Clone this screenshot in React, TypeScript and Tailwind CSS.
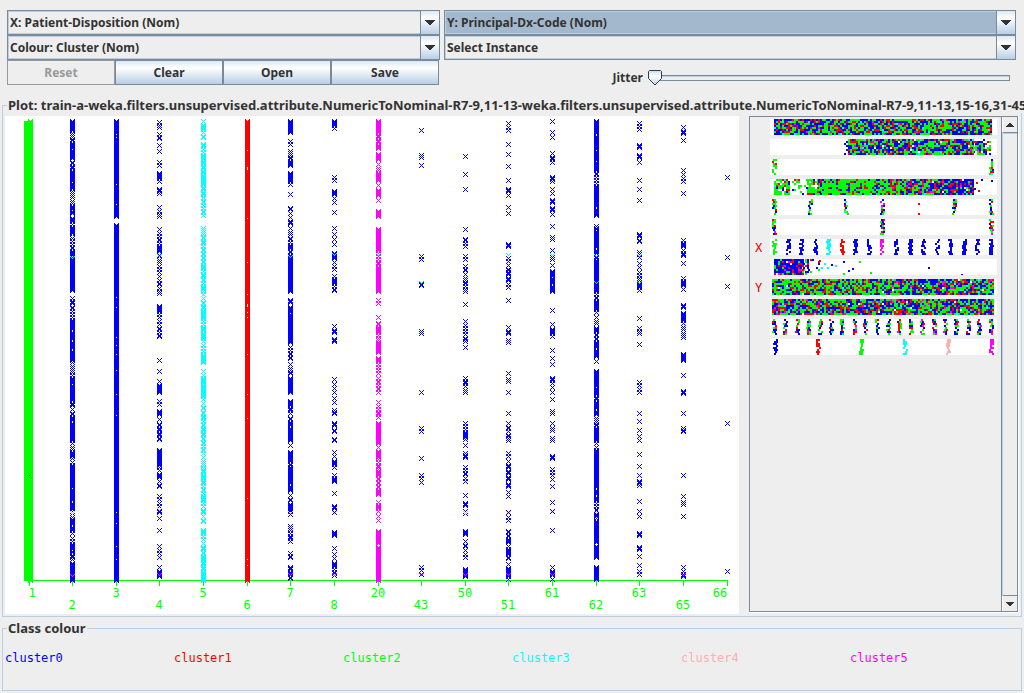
import { useState } from "react";
import type { ReactNode } from "react";

const BLUE = "#0000ff";
const RED = "#ff0000";
const GREEN = "#00ff00";
const CYAN = "#00ffff";
const PINK = "#ffafaf";
const MAGENTA = "#ff00ff";

/** Small seeded generator, so that each render draws the same points. */
function seeded(seed: number) {
  let s = seed;
  return () => {
    s = (s * 1664525 + 1013904223) % 4294967296;
    return s / 4294967296;
  };
}

/*
 * Points of a column: "y" is one mark, "a-b" a solid run,
 * "a-bd" a dense run, "a-bm" a medium run and "a-bl" a loose run.
 */
type Column = {
  label: string;
  x: number;
  labelX?: number;
  color: string;
  runs: string;
  holes?: number[];
  extra?: [number, string][];
};

const COLUMNS: Column[] = [
  { label: "1", x: 30, labelX: 32, color: GREEN, runs: "121-580" },
  {
    label: "2", x: 72, color: BLUE,
    runs: "121-130 133-140l 143-157 158-168m 171-188 191-203l 206-213 218-238d 241-248d 251-255 257-290 298-303m 307-339d 342-362d 366-375l 378-400 403-420m 423-440 443-449m 452-456 458-462l 465-500 503-509 511-517l 519-533d 538-541l 544-559d 563-580",
    extra: [[258, CYAN], [513, PINK], [576, MAGENTA]],
    holes: [149, 182, 210, 236, 384, 488, 550],
  },
  { label: "3", x: 116, color: BLUE, runs: "121-216 225-580", holes: [134, 137, 184, 204, 297, 307, 337, 345, 354, 370, 394, 415, 512, 523, 546, 559] },
  {
    label: "4", x: 159, color: BLUE,
    runs: "122 125 127 134 137-138 145 151 162 165 173-178 181 189-191 193 207 211 214 216 229 233 236 239-251d 255-262m 266-293m 306-311 314-336m 360 371 381 385-392 401 404 411-414 419 424-439d 450-465d 467-486m 496-512m 518 530 546 550 553 557 567 571-576",
    extra: [[256, CYAN], [510, PINK], [575, MAGENTA]],
  },
  {
    label: "5", x: 203, color: CYAN,
    runs: "121 125-129 132-137l 144-168d 171-184 187-205d 208-215m 228-234l 237-258d 261-291d 294-303l 306-338d 341-348m 351-362d 371-375l 378-396 399-421m 424-450d 453-468l 470-500d 503-521m 530-533 536-560m 562-580d",
    holes: [150, 160, 174, 198, 270, 284, 325, 354, 384, 437, 499],
  },
  { label: "6", x: 247, color: RED, runs: "121-580", holes: [150, 167, 168, 169, 218, 262, 294, 304, 305, 306, 312, 317, 354, 394, 418, 498, 559, 565] },
  {
    label: "7", x: 290, color: BLUE,
    runs: "121-132 141 144 151-158l 161-165d 173-181 184 194 208-223m 228-234l 238-256d 258-291 300-302 307-312 314-342 347 350 353-358d 364-373l 378-392 401-413d 418-425d 428-440 445 452-465d 467-483 486-490 495-500l 504-511 514 526-530l 533-541m 553 556-557 567-578d",
    extra: [[257, CYAN], [513, PINK], [575, MAGENTA]],
  },
  {
    label: "8", x: 334, color: BLUE,
    runs: "121-125 128 177 180 191-194 198 202 212 228 234 239 244 253-258d 262 266 269 276-290d 326 330-332 339-341 379 384 388 392 398 402 410 412-413 423-425 430-431 439-440 452 456 461-464 467 475-481d 493 506-508 512 532-535 548 554 558 563-566 569-575m",
    extra: [[255, CYAN], [513, PINK], [575, MAGENTA]],
  },
  {
    label: "20", x: 378, color: MAGENTA,
    runs: "121-132 135-148d 154-159 164-170m 173-180 185 190-195 200 211-216 229-250 253-264d 267-291 300 303 317 323-340d 342-352 358-361 364-373m 378-392d 402-417m 423-443 447 451-457 459-469m 471-494d 502-511d 516 520 531-543 547-580",
    extra: [[255, CYAN]],
  },
  { label: "43", x: 421, color: BLUE, runs: "130 155 157 165 256 259 284 285 331 333 392 428 431 458 475 478 482 567 570 574", extra: [[283, GREEN], [575, MAGENTA]] },
  { label: "50", x: 465, color: BLUE, runs: "156 174 189 229 239-240 243 246 256 259 266-280m 282-291d 304 321-341m 347 378 381-392m 423 426-439d 445 453 455-457 467-481m 495 503-505 511 513 531-534 541-550m 550-557l 569-576", extra: [[513, PINK], [575, MAGENTA]] },
  { label: "51", x: 508, color: BLUE, runs: "123 127 130 144 154 166 180 189-191 195 207 213 244-246 258-270m 272-287m 300 327 331-333 340 342 373 379 381 392 413 423-438m 440 453 456 461-478m 479 484-486 492 496 512 517 520 531-542d 546-558d 564 568-576 579", extra: [[255, CYAN], [513, PINK], [575, MAGENTA]] },
  { label: "61", x: 552, color: BLUE, runs: "121 132 137 153 157-159 162 177-179 181 189 193 200-202 208-210 214 226 237 239 250 257 259 265 271-276 278-283d 286-291 310 324 329-333 336 350 358 364 378-380 383 387 392 399 411 413 423 428 430 438 440 456-458 469 472 475 479 486 502 511 530 567 571-575 579", extra: [[255, CYAN], [512, PINK], [575, MAGENTA]] },
  { label: "62", x: 596, color: BLUE, runs: "121-133 136-170 173-183m 186-206 209-215 226-229l 231-247 250-258d 260-291 294-312d 317-323l 328-347d 350-356 361 371-394 397-408d 411-414 418-425l 428-440 443-447l 450-487 490-500d 503-518d 521-542 546-557 567-579", holes: [150, 161, 387, 504], extra: [[256, CYAN], [283, GREEN], [513, PINK]] },
  { label: "63", x: 639, color: BLUE, runs: "123 126 129 145-147 155-157 162 180 189 200 234-236 240-241 252 254 257 263 267 272-280m 284-287 290 318 328 331 333 344 382 385 389 392 413 421 430 436 440 454 466 475 481-483 485 501 511 516 533-535 547-549 556 565 571 574", extra: [[256, CYAN], [283, GREEN]] },
  { label: "65", x: 683, color: BLUE, runs: "127 131-133 140 170 174 178 181 193 240 243-246 250 253-255 263 278 281-285 289 305-307 313-320 323-337l 354-360 375 391-393 413 428 430-431 475 496 502 504 516 567 571 574-576", extra: [[575, MAGENTA]] },
  { label: "66", x: 727, labelX: 720, color: BLUE, runs: "177 257 286 423 571" },
];

const CROSS: [number, number][] = [
  [-2, -2], [2, -2], [-1, -1], [1, -1], [0, 0], [-1, 1], [1, 1], [-2, 2], [2, 2],
];

function expandRuns(runs: string, random: () => number): number[] {
  const ys: number[] = [];
  for (const token of runs.split(" ")) {
    const [from, rest] = token.split("-");
    if (rest === undefined) {
      ys.push(Number(from));
      continue;
    }
    const end = parseInt(rest, 10);
    const density = rest.replace(/\d/g, "");
    let y = Number(from);
    while (y <= end) {
      ys.push(y);
      if (density === "d") y += random() < 0.72 ? 1 : 3;
      else if (density === "m") y += random() < 0.4 ? 1 : random() < 0.5 ? 3 : 4;
      else if (density === "l") y += random() < 0.6 ? 2 : 4;
      else y += 1;
    }
    ys.push(end);
  }
  return ys;
}

function toPaths(pixels: Map<string, string>, size: number) {
  const byColor = new Map<string, string[]>();
  pixels.forEach((color, key) => {
    const list = byColor.get(color) ?? [];
    list.push(`M${key}h${size}v${size}h-${size}z`);
    byColor.set(color, list);
  });
  return [...byColor].map(([color, list]) => ({ color, d: list.join("") }));
}

function plotPaths() {
  const random = seeded(11);
  const pixels = new Map<string, string>();
  const mark = (x: number, y: number, color: string) =>
    CROSS.forEach(([dx, dy]) => pixels.set(`${x + dx} ${y + dy}`, color));
  for (const col of COLUMNS) {
    expandRuns(col.runs, random).forEach((y) => mark(col.x, y, col.color));
    col.extra?.forEach(([y, color]) => {
      CROSS.slice(0, 5).forEach(([dx, dy]) => pixels.set(`${col.x + dx} ${y + dy}`, color));
    });
    col.holes?.forEach((y) => pixels.delete(`${col.x} ${y}`));
  }
  return toPaths(pixels, 1);
}

const PLOT = plotPaths();

function ScatterPlot() {
  return (
    <svg viewBox="5 116 734 498" className="block h-auto w-full bg-white" role="img" aria-label="Patient-Disposition against Principal-Dx-Code">
      <g shapeRendering="crispEdges">
        <rect x="27" y="580" width="701" height="1" fill={GREEN} />
        {COLUMNS.map((c) => (
          <rect key={c.label} x={c.label === "1" ? 29 : c.x} y="581" width="1" height="5" fill={GREEN} />
        ))}
        <rect x="24" y="121" width="4" height="460" fill={GREEN} />
        {PLOT.map((p) => (
          <path key={p.color} d={p.d} fill={p.color} />
        ))}
        <rect x="29" y="475" width="1" height="1" fill="#004000" />
      </g>
      <g className="font-['DejaVu_Sans_Mono',monospace] text-[12px]" fill={GREEN} textAnchor="middle">
        {COLUMNS.map((c, i) => (
          <text key={c.label} x={c.labelX ?? c.x} y={i % 2 === 0 ? 597 : 609}>
            {c.label}
          </text>
        ))}
      </g>
    </svg>
  );
}

type Weights = [string, number][];
const MIX: Weights = [[BLUE, 0.37], [GREEN, 0.39], [RED, 0.19], [MAGENTA, 0.03], [CYAN, 0.02]];
const GREENISH: Weights = [[GREEN, 0.75], [BLUE, 0.14], [RED, 0.1], [CYAN, 0.01]];
const BLUISH: Weights = [[BLUE, 0.62], [GREEN, 0.16], [RED, 0.18], [MAGENTA, 0.04]];

/** Band of points: from, to, density, colours. */
type Band = { from: number; to: number; density: number; mix: Weights };
/** Narrow cluster of jittered points around x. */
type Cluster = { x: number; mix: Weights };
type Strip = { mark?: string; bands?: Band[]; clusters?: Cluster[]; dots?: [number, number, string][] };

const solid = (color: string): Weights => [[color, 1]];
const DISPOSITION = [GREEN, BLUE, BLUE, BLUE, CYAN, RED, BLUE, BLUE, MAGENTA, BLUE, BLUE, BLUE, BLUE, BLUE, BLUE, BLUE, BLUE];

const STRIPS: Strip[] = [
  { bands: [{ from: 4, to: 221, density: 1, mix: MIX }] },
  {
    bands: [
      { from: 74, to: 79, density: 0.35, mix: BLUISH },
      { from: 78, to: 203, density: 0.98, mix: MIX },
      { from: 203, to: 221, density: 0.65, mix: MIX },
    ],
  },
  { clusters: [{ x: 4, mix: GREENISH }, { x: 221, mix: MIX }] },
  {
    bands: [
      { from: 4, to: 19, density: 0.75, mix: GREENISH },
      { from: 20, to: 38, density: 0.3, mix: GREENISH },
      { from: 37, to: 50, density: 0.8, mix: GREENISH },
      { from: 48, to: 120, density: 1, mix: GREENISH },
      { from: 120, to: 160, density: 1, mix: MIX },
      { from: 160, to: 203, density: 0.98, mix: BLUISH },
    ],
    dots: [[204, 9, BLUE], [206, 3, RED], [208, 11, RED], [211, 0, BLUE], [221, 1, BLUE]],
  },
  {
    clusters: [4, 40, 76, 112, 184, 221].map((x) => ({ x, mix: MIX })),
    dots: [[148, 4, RED], [148, 14, RED]],
  },
  { clusters: [4, 112, 221].map((x) => ({ x, mix: MIX })) },
  { mark: "X", clusters: DISPOSITION.map((c, i) => ({ x: 4 + Math.round(i * 13.55), mix: solid(c) })) },
  {
    bands: [
      { from: 4, to: 33, density: 0.98, mix: [[BLUE, 0.68], [RED, 0.17], [GREEN, 0.09], [MAGENTA, 0.06]] },
      { from: 33, to: 38, density: 0.6, mix: BLUISH },
      { from: 38, to: 50, density: 0.2, mix: BLUISH },
    ],
    dots: [
      [49, 1, RED], [54, 4, CYAN], [61, 5, BLUE], [65, 6, CYAN], [73, 2, BLUE], [73, 14, GREEN], [78, 11, BLUE],
      [82, 9, BLUE], [89, 2, GREEN], [100, 13, GREEN], [158, 8, BLUE], [191, 15, BLUE], [51, 8, CYAN], [57, 8, CYAN],
    ],
  },
  {
    mark: "Y",
    bands: [
      { from: 2, to: 120, density: 0.99, mix: [[GREEN, 0.5], [RED, 0.22], [BLUE, 0.27], [CYAN, 0.01]] },
      { from: 120, to: 223, density: 0.99, mix: MIX },
    ],
  },
  { bands: [{ from: 2, to: 223, density: 0.99, mix: MIX }] },
  { clusters: Array.from({ length: 20 }, (_, i) => ({ x: 4 + Math.round(i * 11.4), mix: MIX })) },
  { clusters: [BLUE, RED, GREEN, CYAN, PINK, MAGENTA].map((c, i) => ({ x: 5 + Math.round(i * 43.2), mix: solid(c) })) },
];

function pick(mix: Weights, r: number) {
  let sum = 0;
  for (const [color, weight] of mix) {
    sum += weight;
    if (r < sum) return color;
  }
  return mix[0][0];
}

function stripPaths(strip: Strip, seed: number) {
  const random = seeded(seed * 977 + 5);
  const pixels = new Map<string, string>();
  strip.bands?.forEach((b) => {
    for (let x = b.from; x < b.to; x += 2)
      for (let y = 0; y < 16; y += 2)
        if (random() < b.density) pixels.set(`${x} ${y}`, pick(b.mix, random()));
  });
  strip.clusters?.forEach((c) => {
    for (let y = 0; y < 16; y += 2) {
      const offset = Math.floor(random() * 4) - 2;
      pixels.set(`${c.x + offset} ${y}`, pick(c.mix, random()));
      if (random() < 0.55) pixels.set(`${c.x + (offset < 0 ? offset + 2 : offset - 2)} ${y}`, pick(c.mix, random()));
    }
  });
  strip.dots?.forEach(([x, y, color]) => pixels.set(`${x} ${y}`, color));
  return toPaths(pixels, 2);
}

const STRIP_PATHS = STRIPS.map((strip, i) => stripPaths(strip, i + 1));

function AttributeStrips() {
  return (
    <div className="flex min-w-0 flex-1 flex-col gap-1 pt-0.5 pr-1">
      {STRIPS.map((strip, i) => (
        <div key={i} className="flex h-4 items-center">
          <span className="w-5 pt-0.5 pl-[5px] font-['DejaVu_Sans_Mono',monospace] text-[12px] leading-4 text-[#e00000]">{strip.mark}</span>
          <svg viewBox="0 0 227 16" preserveAspectRatio="none" className="h-4 min-w-0 flex-1 bg-white" shapeRendering="crispEdges" aria-hidden="true">
            {STRIP_PATHS[i].map((p) => (
              <path key={p.color} d={p.d} fill={p.color} />
            ))}
          </svg>
        </div>
      ))}
    </div>
  );
}

function Arrow({ up = false, small = false }: { up?: boolean; small?: boolean }) {
  return (
    <svg
      width={small ? 8 : 10}
      height={small ? 4 : 5}
      viewBox="0 0 10 5"
      shapeRendering="crispEdges"
      className={up ? "rotate-180" : ""}
      aria-hidden="true"
    >
      <path d="M0 0h10v1h-1v1h-1v1h-1v1h-1v1h-2v-1h-1v-1h-1v-1h-1v-1h-1z" fill="#333333" />
    </svg>
  );
}

function Combo({ label, text, selected = false }: { label: string; text: string; selected?: boolean }) {
  return (
    <div className="relative h-[25px] border border-[#7a8a99]">
      <select
        aria-label={label}
        className={`block h-full w-full appearance-none border border-[#b8cfe5] pr-5 pl-px font-bold text-[#333333] outline-none ${selected ? "bg-[#a3b8cc]" : "bg-[#eeeeee]"}`}
      >
        <option>{text}</option>
      </select>
      <span className="pointer-events-none absolute inset-y-0 right-0 flex w-[19px] items-center justify-center border-l border-[#7a8a99] bg-linear-to-b from-[#dde8f3] via-white via-30% to-[#b8cfe5]">
        <Arrow />
      </span>
    </div>
  );
}

function ToolButton({ children, disabled = false }: { children: ReactNode; disabled?: boolean }) {
  return (
    <button
      type="button"
      disabled={disabled}
      className={`h-[25px] flex-1 border font-bold ${disabled ? "border-[#999999] bg-[#eeeeee] text-[#999999]" : "border-[#7a8a99] bg-linear-to-b from-[#dde8f3] via-white via-30% to-[#b8cfe5] text-[#333333]"}`}
    >
      {children}
    </button>
  );
}

function JitterSlider() {
  const [value, setValue] = useState(0);
  return (
    <div className="flex items-center justify-end gap-[5px] pt-2 pr-1.5">
      <label htmlFor="jitter" className="font-bold">
        Jitter
      </label>
      <div className="relative flex h-5 w-[362px] items-center">
        <div className="ml-1.5 h-1.5 flex-1 border border-[#7a8a99] bg-[#eeeeee] shadow-[inset_0_1px_0_#b8cfe5]" />
        <input
          id="jitter"
          type="range"
          min={0}
          max={50}
          value={value}
          onChange={(e) => setValue(Number(e.target.value))}
          className="absolute inset-0 h-full w-full opacity-0"
        />
        <svg
          width="15"
          height="16"
          viewBox="0 0 15 16"
          className="pointer-events-none absolute top-0.5"
          style={{ left: `${(value / 50) * 95}%` }}
          aria-hidden="true"
        >
          <defs>
            <linearGradient id="thumb" x1="0" y1="0" x2="0" y2="1">
              <stop offset="0" stopColor="#c8daec" />
              <stop offset="0.4" stopColor="#ffffff" />
              <stop offset="1" stopColor="#b8cfe5" />
            </linearGradient>
          </defs>
          <path d="M1.5 .5h11l1 1v7l-6.500 6.500l-6.500-6.500v-7z" fill="url(#thumb)" stroke="#333c48" />
        </svg>
      </div>
    </div>
  );
}

const CLASSES = [
  { name: "cluster0", style: "text-[#0000ff]" },
  { name: "cluster1", style: "text-[#ff0000]" },
  { name: "cluster2", style: "text-[#00ff00]" },
  { name: "cluster3", style: "text-[#00ffff]" },
  { name: "cluster4", style: "text-[#ffafaf]" },
  { name: "cluster5", style: "text-[#ff00ff]" },
];

export default function App() {
  return (
    <main className="min-h-screen overflow-hidden bg-[#eeeeee] pb-0.5 font-['Noto_Sans','Liberation_Sans',sans-serif] text-[12px] leading-4 text-[#333333]">
      <div className="grid grid-cols-[433fr_572fr] gap-x-1 pt-2.5 pr-2 pl-[7px]">
        <div>
          <Combo label="X attribute" text="X: Patient-Disposition (Nom)" />
          <Combo label="Colour attribute" text="Colour: Cluster (Nom)" />
          <div className="flex pr-px">
            <ToolButton disabled>Reset</ToolButton>
            <ToolButton>Clear</ToolButton>
            <ToolButton>Open</ToolButton>
            <ToolButton>Save</ToolButton>
          </div>
        </div>
        <div>
          <Combo label="Y attribute" text="Y: Principal-Dx-Code (Nom)" selected />
          <Combo label="Instance shape" text="Select Instance" />
          <JitterSlider />
        </div>
      </div>

      <fieldset className="mx-0.5 mt-[9px] min-w-0 border border-[#b8cfe5] px-0.5 pb-0.5">
        <legend className="ml-0.5 px-px text-[13px] leading-4 font-bold whitespace-nowrap">
          Plot: train-a-weka.filters.unsupervised.attribute.NumericToNominal-R7-9,11-13-weka.filters.unsupervised.attribute.NumericToNominal-R7-9,11-13,15-16,31-45
        </legend>
        <div className="flex gap-2.5 pt-[3px]">
          <div className="min-w-0 flex-1">
            <ScatterPlot />
          </div>
          <div className="mb-px flex w-[270px] border-r border-b border-r-white border-b-white">
            <div className="flex min-w-0 flex-1 border border-[#7a8a99]">
              <AttributeStrips />
              <div className="flex w-4 flex-col border-l border-[#7a8a99]">
                <button type="button" aria-label="Scroll up" className="flex h-4 items-center justify-center border-b border-l border-b-[#7a8a99] border-l-white">
                  <Arrow up small />
                </button>
                <div className="flex-1 border-t border-l border-[#b8cfe5]" />
                <button type="button" aria-label="Scroll down" className="flex h-4 items-center justify-center border-t border-l border-t-[#7a8a99] border-l-white">
                  <Arrow small />
                </button>
              </div>
            </div>
          </div>
        </div>
      </fieldset>

      <fieldset className="mx-0.5 mt-[3px] min-w-0 border border-[#b8cfe5] px-0.5">
        <legend className="ml-0.5 px-px text-[13px] leading-4 font-bold">Class colour</legend>
        <div className="grid grid-cols-6 pt-3.5 pb-6 font-['DejaVu_Sans_Mono',monospace]">
          {CLASSES.map((c) => (
            <span key={c.name} className={c.style}>
              {c.name}
            </span>
          ))}
        </div>
      </fieldset>
    </main>
  );
}
